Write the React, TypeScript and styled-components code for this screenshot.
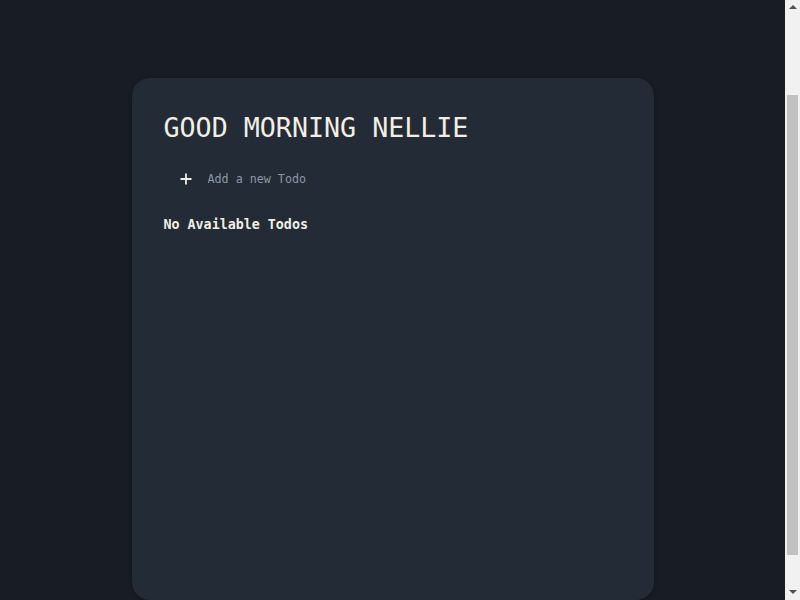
import React from "react";
import styled, { createGlobalStyle } from "styled-components";

const GlobalStyle = createGlobalStyle`
  html, body {
    margin: 0;
    padding: 0;
    background: #181d25;
  }
  body {
    font-family: "DejaVu Sans Mono", monospace;
  }
`;

const Page = styled.div`
  display: flex;
  justify-content: center;
  padding: 78px 15px 36px 0;
  min-height: 100vh;
  box-sizing: border-box;
`;

const Card = styled.main`
  width: 522px;
  height: 522px;
  box-sizing: border-box;
  padding: 34px 32px 32px;
  background: #222b36;
  border-radius: 18px;
  box-shadow: 0 1px 4px rgba(0, 0, 0, 0.35);
  display: flex;
  flex-direction: column;
`;

const Title = styled.h1`
  margin: 0;
  font-family: "DejaVu Sans Mono", monospace;
  font-weight: 400;
  font-size: 26.67px;
  color: #f2eee4;
`;

const AddRow = styled.label`
  display: flex;
  align-items: center;
  gap: 16px;
  height: 34px;
  margin-top: 19px;
  padding-left: 16px;
`;

const PlusIcon = styled.svg`
  width: 12px;
  height: 12px;
  flex: none;
`;

const TodoInput = styled.input`
  flex: 1;
  border: none;
  outline: none;
  background: transparent;
  padding: 0;
  font-family: "DejaVu Sans Mono", monospace;
  font-size: 11.7px;
  color: #f2eee4;
  &::placeholder {
    color: #8c97a4;
  }
`;

const Empty = styled.p`
  margin: 21px 0 0;
  font-family: "DejaVu Sans Mono", monospace;
  font-weight: 700;
  font-size: 13.33px;
  color: #f2eee4;
`;

/* Classic window scrollbar drawn over the right edge */
const ScrollBar = styled.div`
  position: fixed;
  top: 0;
  right: 0;
  width: 15px;
  height: 100vh;
  background: #f1f1f1;
  display: flex;
  flex-direction: column;
  align-items: center;
`;

const Arrow = styled.div<{ $dir: "up" | "down" }>`
  flex: none;
  height: 17px;
  width: 15px;
  display: flex;
  justify-content: center;
  align-items: ${(p) => (p.$dir === "up" ? "flex-start" : "flex-end")};
  padding: ${(p) => (p.$dir === "up" ? "5px 0 0" : "0 0 6px")};
  box-sizing: border-box;
  &::before {
    content: "";
    width: 0;
    height: 0;
    border-left: 4px solid transparent;
    border-right: 4px solid transparent;
    ${(p) =>
      p.$dir === "up"
        ? "border-bottom: 4px solid #505050;"
        : "border-top: 4px solid #505050;"}
  }
`;

const Track = styled.div`
  flex: 1;
  width: 15px;
  display: flex;
  flex-direction: column;
  align-items: center;
  padding: 78px 0 28px;
  box-sizing: border-box;
`;

const Thumb = styled.div`
  flex: 1;
  width: 11px;
  background: #c1c1c1;
`;

export default function App() {
  return (
    <>
      <GlobalStyle />
      <Page>
        <Card>
          <Title>GOOD MORNING NELLIE</Title>
          <AddRow>
            <PlusIcon viewBox="0 0 12 12">
              <path d="M6 0.5v11M0.5 6h11" stroke="#f2eee4" strokeWidth="1.8" />
            </PlusIcon>
            <TodoInput placeholder="Add a new Todo" />
          </AddRow>
          <Empty>No Available Todos</Empty>
        </Card>
      </Page>
      <ScrollBar aria-hidden="true">
        <Arrow $dir="up" />
        <Track>
          <Thumb />
        </Track>
        <Arrow $dir="down" />
      </ScrollBar>
    </>
  );
}
